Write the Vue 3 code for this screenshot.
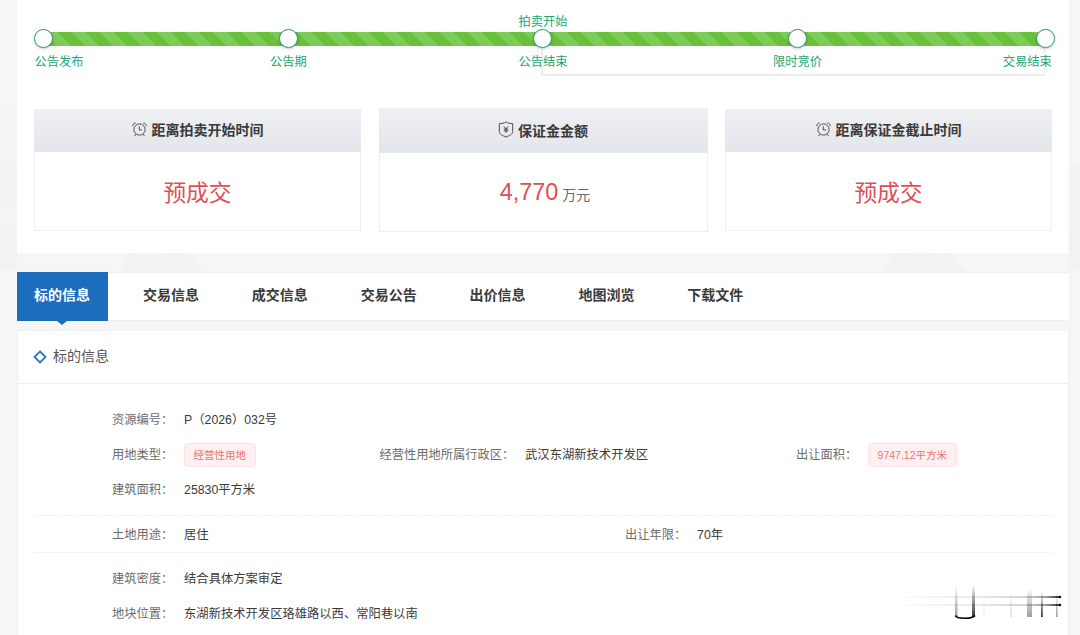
<script setup>
const steps = [
  { x: 26.5, label: '公告发布', align: 'start' },
  { x: 271.3, label: '公告期' },
  { x: 525.9, label: '公告结束', top: '拍卖开始' },
  { x: 780.6, label: '限时竞价' },
  { x: 1028.7, label: '交易结束', align: 'end' },
]
const cards = [
  { icon: 'clock', title: '距离拍卖开始时间', value: '预成交' },
  { icon: 'shield', title: '保证金金额', value: '4,770', unit: '万元' },
  { icon: 'clock', title: '距离保证金截止时间', value: '预成交' },
]
const tabs = ['标的信息', '交易信息', '成交信息', '交易公告', '出价信息', '地图浏览', '下载文件']
</script>

<template>
  <div class="page" lang="zh-CN">
    <svg class="scenery" width="1080" height="290" viewBox="0 0 1080 290">
      <g fill="#ededed" opacity="0.45">
        <path d="M0 108 L14 109 L17 150 L17 270 L0 270Z" opacity=".5" />
        <path d="M0 166 L17 162 V205 L0 200Z" />
        <path d="M0 232 L8 228 L17 240 V268 L0 270Z" />
        <path d="M120 272 L130 253 L148 256 L166 253 L190 254 L204 272Z" />
        <path d="M883 272 L893 253 L920 254 L950 253 L966 272Z" />
        <path d="M1069 165 L1080 163 V270 H1069Z" opacity=".6" />
        <path d="M1069 230 L1080 226 V250 L1072 270Z" />
      </g>
    </svg>

    <section class="panel summary">
      <div class="timeline">
        <div class="return-line"></div>
        <div class="bar"></div>
        <div v-for="s in steps" :key="s.label" class="step" :class="s.align" :style="{ left: s.x + 'px' }">
          <span v-if="s.top" class="step-top">{{ s.top }}</span>
          <i class="dot"></i>
          <span class="step-label">{{ s.label }}</span>
        </div>
      </div>
      <div class="cards">
        <div v-for="c in cards" :key="c.title" class="card" :class="c.icon">
          <div class="card-head">
            <svg v-if="c.icon === 'clock'" width="15" height="15" viewBox="0 0 15 15" fill="none" stroke="#4a4d52" stroke-width="1">
              <circle cx="7.5" cy="7.5" r="5.6" />
              <path d="M7.3 4.3V8H10M.8 4.1C.7 2 2.2.9 3.8 1.1M14.2 4.1C14.3 2 12.8.9 11.2 1.1M3.8 12.2L2.6 14M11.2 12.2L12.4 14" />
            </svg>
            <svg v-else width="16" height="17" viewBox="0 0 16 17" fill="none" stroke="#4a4d52" stroke-width="1">
              <path d="M8 .8C6.2 2.3 3.8 2.6 1.3 2.6V10.5C1.3 13.6 5 14.6 8 16.1C11 14.6 14.7 13.6 14.7 10.5V2.6C12.2 2.6 9.8 2.3 8 .8Z" />
              <path d="M5.9 5.4L8 8L10.1 5.4M8 8V11.8M5.8 8.2H10.2M5.8 9.9H10.2" />
            </svg>
            <b>{{ c.title }}</b>
          </div>
          <div class="card-body">
            <span class="value">{{ c.value }}</span><span v-if="c.unit" class="unit">{{ c.unit }}</span>
          </div>
        </div>
      </div>
    </section>

    <nav class="tabs">
      <div v-for="(t, i) in tabs" :key="t" class="tab" :class="{ active: i === 0 }">{{ t }}</div>
    </nav>

    <section class="panel detail">
      <header class="detail-head">
        <svg width="14" height="14" viewBox="0 0 14 14"><path d="M7 1.5L12.5 7L7 12.5L1.5 7Z" fill="none" stroke="#2b78b8" stroke-width="1.8" /></svg>
        <span>标的信息</span>
      </header>
      <div class="group first">
        <div class="row"><label>资源编号：</label><span>P（2026）032号</span></div>
        <div class="row type-row">
          <div class="field"><label>用地类型：</label><em>经营性用地</em></div>
          <div class="field"><label>经营性用地所属行政区：</label><span>武汉东湖新技术开发区</span></div>
          <div class="field"><label>出让面积：</label><em>9747.12平方米</em></div>
        </div>
        <div class="row"><label>建筑面积：</label><span>25830平方米</span></div>
      </div>
      <div class="group second">
        <div class="field"><label>土地用途：</label><span>居住</span></div>
        <div class="field"><label>出让年限：</label><span>70年</span></div>
      </div>
      <div class="group third">
        <div class="row"><label>建筑密度：</label><span>结合具体方案审定</span></div>
        <div class="row"><label>地块位置：</label><span>东湖新技术开发区珞雄路以西、常阳巷以南</span></div>
      </div>
      <svg class="stamp" width="190" height="50" viewBox="0 0 190 50">
        <defs>
          <linearGradient id="fadeX"><stop offset="0" stop-color="#000" stop-opacity="0" /><stop offset=".5" stop-color="#000" stop-opacity=".1" /><stop offset=".8" stop-color="#000" stop-opacity=".22" /><stop offset=".92" stop-color="#000" stop-opacity=".5" /><stop offset="1" stop-color="#000" /></linearGradient>
          <linearGradient id="fadeY" x2="0" y2="1"><stop offset="0" stop-color="#000" stop-opacity="0" /><stop offset="1" stop-color="#000" stop-opacity=".8" /></linearGradient>
          <linearGradient id="fadeSoft" x2="0" y2="1"><stop offset="0" stop-color="#000" stop-opacity="0" /><stop offset="1" stop-color="#000" stop-opacity=".38" /></linearGradient>
        </defs>
        <g fill="url(#fadeX)"><rect x="3" y="16.2" width="168" height="1.6" /><rect x="3" y="24.2" width="168" height="1.6" /></g>
        <circle cx="171" cy="17" r="1.2" /><circle cx="171" cy="25" r="1.2" />
        <g fill="url(#fadeY)"><rect x="83" y="5" width="3" height="32" /><rect x="152" y="11" width="1.8" height="26" /></g>
        <g fill="url(#fadeSoft)"><rect x="66" y="5" width="2.5" height="32" /><rect x="138" y="8" width="5" height="29" /><rect x="167" y="11" width="1.6" height="26" /><rect x="121" y="12" width="2" height="25" opacity=".3" /><rect x="94" y="12" width="2" height="25" opacity=".12" /></g>
        <path d="M66.5 35.5C67.5 39.2 83.5 39.2 86 35.5" fill="none" stroke="#000" stroke-width="1.5" />
      </svg>
    </section>
  </div>
</template>

<style>
body { margin: 0; background: #f6f6f6; overflow: hidden; }
</style>

<style scoped>
* { box-sizing: border-box; }
.page {
  position: relative;
  width: 1080px;
  height: 635px;
  padding: 0 11px 0 17px;
  overflow: hidden;
  background: #f6f6f6;
  font-family: "Liberation Sans", "Noto Sans CJK SC", sans-serif;
  font-size: 12.25px;
  color: #3a3a3a;
}
.scenery { position: absolute; left: 0; top: 0; }
.panel { position: relative; background: #fff; }
.summary { height: 253px; padding: 0 17px; }
.timeline { height: 108px; padding-top: 32px; }
.bar {
  height: 14px;
  margin: 0 7px 0 9px;
  background: repeating-linear-gradient(45deg, #67c23a 0 10px, #7ecb58 10px 20px);
}
.return-line {
  position: absolute;
  left: 524px;
  top: 46px;
  width: 504px;
  height: 30px;
  border: solid #eceeee;
  border-width: 0 1px 2px 2px;
}
.step {
  position: absolute;
  top: 29px;
  width: 0;
  display: flex;
  flex-direction: column;
  align-items: center;
  color: #22a574;
  white-space: nowrap;
  line-height: 18px;
}
.dot {
  flex: none;
  width: 19px;
  height: 19px;
  border: 1px solid #2c9d75;
  border-radius: 50%;
  background: #fff;
  box-shadow: 0 1px 3px rgba(0, 0, 0, .22);
}
.step-label { margin-top: 5px; }
.step-top { position: absolute; bottom: 100%; margin-bottom: -2px; }
.start .step-label { align-self: flex-start; margin-left: -9px; }
.end .step-label { align-self: flex-end; margin-right: -6px; }
.cards {
  display: grid;
  grid-template-columns: 327px 329px 327px;
  justify-content: space-between;
  align-items: start;
}
.card { height: 122px; margin-top: 1px; border: 1px solid #eceef0; border-top: 0; }
.card.shield { height: 124px; margin-top: 0; }
.card-head {
  height: 43px;
  margin: 0 -1px;
  display: flex;
  align-items: center;
  justify-content: center;
  gap: 5px;
  background: linear-gradient(#eef0f3, #e3e6ea);
  font-size: 14px;
  line-height: 20px;
  padding-bottom: 1px;
}
.card-head svg { margin-top: -2px; }
.shield .card-head { height: 45px; padding-bottom: 0; gap: 4px; }
.card-body {
  height: 78px;
  display: flex;
  justify-content: center;
  align-items: baseline;
  padding-top: 24px;
  line-height: 34px;
}
.shield .card-body { padding: 23px 0 0 4px; }
.value { font-size: 22.75px; color: #dc5057; }
.shield .value { font-size: 23.4px; line-height: 32px; }
.unit { margin-left: 4px; font-size: 14px; line-height: 20px; color: #6a6a6a; }
.tabs {
  position: relative;
  z-index: 1;
  height: 49px;
  margin-top: 19px;
  display: flex;
  gap: 17.9px;
  background: #fff;
  box-shadow: inset 0 -1px #eee, inset 0 1px #f0f0f0;
}
.tab {
  width: 91px;
  padding-right: 1px;
  text-align: center;
  font-size: 14px;
  font-weight: bold;
  line-height: 47px;
}
.tab.active { position: relative; color: #fff; background: #1c6dbe; }
.tab.active::after {
  content: "";
  position: absolute;
  left: 40px;
  top: 100%;
  border: solid transparent;
  border-width: 4px 5px 0;
  border-top-color: #1c6dbe;
}
.detail { height: 305px; margin-top: 9px; border: 1px solid #f1f1f1; border-bottom: 0; }
.detail-head {
  height: 53px;
  padding: 0 0 4px 15px;
  display: flex;
  align-items: center;
  gap: 6px;
  border-bottom: 1px solid #eee;
  font-size: 14px;
  color: #555;
}
.detail-head svg { margin-top: 4px; }
.group { margin: 0 16px; padding-left: 78px; }
.row { height: 35px; display: flex; align-items: center; }
.field { display: flex; align-items: center; }
.row > span, .field > span { font-size: 12.3px; }
label { color: #6c6c6c; white-space: nowrap; margin-right: 10.8px; }
em {
  height: 24px;
  margin-top: 2px;
  padding: 0 8.5px;
  border: 1px solid #fde2e2;
  border-radius: 3.5px;
  background: #fef0f0;
  color: #ed7474;
  font-size: 10.5px;
  font-style: normal;
  line-height: 23px;
}
.first { height: 132px; padding-top: 17px; border-bottom: 1px dashed #eee; }
.type-row { display: grid; grid-template-columns: 267.5px 416.5px 1fr; }
.second { height: 37px; display: grid; grid-template-columns: 513px 1fr; border-bottom: 1px solid #f4f4f4; }
.third { padding-top: 8px; }
.third .row { padding-bottom: 1px; }
.stamp { position: absolute; left: 871px; top: 249px; }
</style>
